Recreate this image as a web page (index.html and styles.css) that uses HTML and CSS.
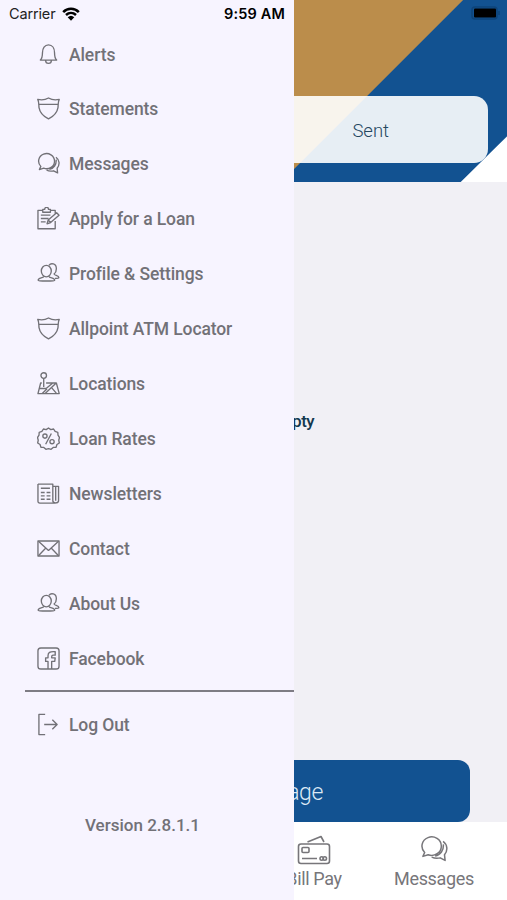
FILE: index.html
```
<!DOCTYPE html>
<html lang="en">
<head>
    <meta charset="UTF-8">
    <meta name="viewport" content="width=device-width, initial-scale=1.0">
    <title>Messages</title>
    <link rel="stylesheet" href="styles.css">
</head>
<body>
    <svg class="sprite">
        <symbol id="bell" viewBox="0 0 24 24">
            <path d="M3.500 17.800c1.800-1.500 2.200-3 2.200-7.500C5.700 5.500 8 2 12 2s6.300 3.500 6.300 8.300c0 4.500.4 6 2.200 7.500zM9 18.200a3 3 0 0 0 6 0"/>
        </symbol>
        <symbol id="shield" viewBox="0 0 24 24">
            <path d="M.8 2.500c4 .9 7.700.6 11.200-1.500 3.500 2.100 7.200 2.400 11.200 1.500-1.500 3-.9 5.500-1.300 8.500-.8 5-4.500 9-9.900 11.800C6.600 20 2.900 16 2.100 11c-.4-3 .2-5.500-1.300-8.500zM2.200 7.700h19.600"/>
        </symbol>
        <symbol id="chat" viewBox="0 0 24 24">
            <path d="M4 15A8.300 7.900 0 1 1 7 16.900L2.500 18.300zM19.800 5.500c3.700 2.700 4.300 7.700 1.200 11.500l.5 4.800-4.200-2.200c-2.500.6-5 .4-7.300-.6M20 8c.5 5-2.500 9.300-7 10"/>
        </symbol>
        <symbol id="apply" viewBox="0 0 24 24">
            <path d="M6 3.500H1v19.200h18v-8M14 3.500h5v3.200M6 5.500v-3h2c0-3 4-3 4 0h2v3zM4 8.500h10M4 12h8M4 15.500h5M10.500 17.500l1.200-4L20.500 6l2.500 2.600-8.800 7.600zM11.700 13.500l2.500 2.700"/>
        </symbol>
        <symbol id="people" viewBox="0 0 24 24">
            <ellipse cx="9.700" cy="9.500" rx="5.200" ry="6"/>
            <path d="M7 14.800c0 2.500-5.800 1.200-5.800 4.200 0 1.200 17.300 1.200 17.300 0 0-3-6-1.700-6-4.200M12.500 3.500c2-2.800 7.700-2.300 7.700 3.500 0 2.500-1 4.500-2.400 5.500.2 1.800 5 1.300 5 3.700 0 .6-1.500.9-4 .9"/>
        </symbol>
        <symbol id="map" viewBox="0 0 24 24">
            <circle cx="7" cy="3.700" r="2.900"/>
            <path d="M7 6.600v9M5 11.500H3.800L1 22.500h22.200l-3-11H9.500M2.500 17l7 .2 7-5.700M8.500 22.500L19.500 12M5.500 22.500l5-5M15 16l5.500 6.500"/>
        </symbol>
        <symbol id="rate" viewBox="0 0 24 24">
            <path d="M12 1l2.400 1.700 2.900-.6 1.600 2.500 2.800.9.200 3L23.500 11l-.8 2.800.6 2.900-2.500 1.600-.9 2.800-3 .2-2.200 2L12 22.500l-2.700.8-2.200-2-3-.2-.9-2.800-2.500-1.600.6-2.900L.5 11l1.600-2.500.2-3 2.800-.9 1.600-2.500 2.900.6z"/>
            <circle cx="8.300" cy="9.500" r="2.200"/><circle cx="15.700" cy="15.300" r="2.200"/>
            <path d="M15 6.800L9 18"/>
        </symbol>
        <symbol id="news" viewBox="0 0 24 24">
            <path d="M1 2.200h15.500v17.300c0 3 6 3 6 0V4.500h-3v15M19.500 22H3c-1.300 0-2-.7-2-2V2.200M16.500 4.500h3"/>
            <path class="bold" d="M4 6.500h9.500M4 11h4M4 14.500h4M4 18h4M10 11h4M10 14.500h4M10 18h4"/>
        </symbol>
        <symbol id="mail" viewBox="0 0 24 24">
            <path class="bold" d="M1 4.200h22v15.600H1z"/>
            <path d="M1.500 4.500L12 14 22.500 4.500M1.500 19.500l7.700-8M22.500 19.500l-7.700-8"/>
        </symbol>
        <symbol id="facebook" viewBox="0 0 24 24">
            <rect x="1" y="1" width="22" height="22" rx="3"/>
            <path d="M11.500 23v-8H9v-3.700h2.500V9c0-3 1.700-4.500 7.500-4v3.500h-2c-1.300 0-1.700.5-1.700 2.800H19l-.5 3.700h-3.200v8"/>
        </symbol>
        <symbol id="logout" viewBox="0 0 24 24">
            <path d="M8.500 1.500H2v21h6.500M7.500 12H21M16 7l5 5-5 5"/>
        </symbol>
        <symbol id="cards" viewBox="0 0 34 30">
            <rect x="1.500" y="9" width="31" height="19.500" rx="2.500"/>
            <rect x="5" y="12.500" width="7" height="5" rx="1"/>
            <path d="M10.500 7L24 1.500l3 5.500M5 23.500h15"/>
            <circle cx="24.700" cy="23.500" r="1.700"/><circle cx="27.800" cy="23.500" r="1.700"/>
        </symbol>
    </svg>

    <div class="screen">
        <header class="banner">
            <div class="tabs">
                <span class="tab">Inbox</span>
                <span class="tab">Sent</span>
            </div>
        </header>
        <main class="content">
            <p class="empty">Mailbox is empty</p>
            <button class="new-message">New Message</button>
        </main>
        <nav class="bottom-nav">
            <a class="nav-item"><svg class="nav-icon"><use href="#cards"/></svg>Bill Pay</a>
            <a class="nav-item"><svg class="nav-icon chat"><use href="#chat"/></svg>Messages</a>
        </nav>

        <svg class="battery" viewBox="0 0 30 14">
            <rect class="case" x="1" y="1" width="25" height="12" rx="3"/>
            <rect x="3" y="2.500" width="22" height="9" rx="1"/>
            <path class="case" d="M28 5v4"/>
        </svg>

        <aside class="drawer">
            <div class="status-bar">
                <span>Carrier</span>
                <svg class="wifi" viewBox="0 0 18 14">
                    <path d="M1.200 5.200C5.500.7 12.500.7 16.800 5.200M4 8c3-2.800 7-2.800 10 0"/>
                    <path class="dot" d="M5.700 10.200a4.800 4.800 0 0 1 6.600 0L9 13.700z"/>
                </svg>
                <span class="time">9:59 AM</span>
            </div>
            <ul class="menu">
                <li><svg class="icon"><use href="#bell"/></svg>Alerts</li>
                <li><svg class="icon"><use href="#shield"/></svg>Statements</li>
                <li><svg class="icon"><use href="#chat"/></svg>Messages</li>
                <li><svg class="icon"><use href="#apply"/></svg>Apply for a Loan</li>
                <li><svg class="icon"><use href="#people"/></svg>Profile &amp; Settings</li>
                <li><svg class="icon"><use href="#shield"/></svg>Allpoint ATM Locator</li>
                <li><svg class="icon"><use href="#map"/></svg>Locations</li>
                <li><svg class="icon"><use href="#rate"/></svg>Loan Rates</li>
                <li><svg class="icon"><use href="#news"/></svg>Newsletters</li>
                <li><svg class="icon"><use href="#mail"/></svg>Contact</li>
                <li><svg class="icon"><use href="#people"/></svg>About Us</li>
                <li><svg class="icon"><use href="#facebook"/></svg>Facebook</li>
            </ul>
            <div class="logout"><svg class="icon"><use href="#logout"/></svg>Log Out</div>
            <p class="version">Version 2.8.1.1</p>
        </aside>
    </div>
</body>
</html>
```
FILE: styles.css
```
body {
    margin: 0;
    font-family: Roboto, sans-serif;
    color: #727177;
}
svg {
    fill: none;
    stroke: currentColor;
    stroke-linejoin: round;
}
.sprite {
    display: none;
}
.screen {
    position: relative;
    width: 507px;
    height: 900px;
    display: flex;
    flex-direction: column;
    overflow: hidden;
    background: #f1f0f5;
}

/* page behind the drawer */
.banner {
    box-sizing: border-box;
    height: 182px;
    padding: 96px 19px 0;
    background: linear-gradient(315.500deg, #fff 32px, transparent 33px), linear-gradient(135deg, #bb8d4b 327px, #125291 328px);
}
.tabs {
    display: flex;
    height: 67px;
    border-radius: 14px;
    background: rgba(255, 255, 255, 0.9);
}
.tab {
    flex: 1;
    text-align: center;
    line-height: 70px;
    font-size: 18.5px;
    font-weight: 300;
    color: #24475f;
}
.content {
    flex: 1;
    display: flex;
    flex-direction: column;
    justify-content: space-between;
    padding: 228px 37px 0;
}
.empty {
    margin: 0;
    text-align: center;
    font-size: 17px;
    line-height: 22px;
    font-weight: 500;
    letter-spacing: -0.5px;
    color: #12384f;
}
.new-message {
    height: 62px;
    padding: 3px 0 0;
    border: 0;
    border-radius: 12px;
    background: #125291;
    color: #dce9f5;
    font-family: inherit;
    font-size: 23px;
    font-weight: 300;
    letter-spacing: -0.4px;
}
.bottom-nav {
    box-sizing: border-box;
    height: 78px;
    padding: 13px 13px 0;
    display: flex;
    justify-content: flex-end;
    background: #fff;
}
.nav-item {
    width: 120px;
    display: flex;
    flex-direction: column;
    align-items: center;
    gap: 1px;
    font-size: 18px;
    line-height: 26px;
    letter-spacing: -0.35px;
    color: #77767a;
}
.nav-icon {
    width: 34px;
    height: 30px;
    stroke-width: 1.6;
}
.nav-icon.chat {
    height: 28px;
    margin-bottom: 2px;
    stroke-width: 1.3;
}
.battery {
    position: absolute;
    top: 6px;
    right: 6px;
    width: 30px;
    height: 14px;
    fill: #000;
    stroke: none;
}
.battery .case {
    fill: none;
    stroke: #0e4479;
    stroke-width: 1.5;
}

/* side menu */
.drawer {
    position: absolute;
    top: 0;
    left: 0;
    width: 294px;
    height: 900px;
    background: #f7f4ff;
}
.status-bar {
    display: flex;
    align-items: center;
    height: 27px;
    padding: 0 9px;
    font-family: Inter, sans-serif;
    font-size: 14.5px;
    color: #222;
}
.status-bar span:first-child {
    letter-spacing: -0.15px;
}
.wifi {
    width: 18px;
    height: 14px;
    margin-left: 7px;
    color: #000;
    stroke-width: 2.5;
}
.wifi .dot {
    fill: #000;
    stroke: none;
}
.time {
    margin-left: auto;
    font-weight: 600;
    letter-spacing: 0.15px;
    color: #000;
}
.menu {
    list-style: none;
    margin: 0 0 0 25px;
    padding: 1px 0 4px 12px;
    border-bottom: 2px solid #7e7c84;
}
.menu li, .logout {
    display: flex;
    align-items: center;
    gap: 9px;
    height: 55px;
    font-size: 17.5px;
    font-weight: 500;
    letter-spacing: -0.1px;
}
.menu li:first-child {
    height: 53px;
}
.icon {
    width: 23px;
    height: 23px;
    stroke-width: 1.4;
}
.icon .bold {
    stroke-width: 1.8;
}
.logout {
    margin: 5px 0 0 37px;
}
.version {
    margin: 62px 0 0 85px;
    font-size: 17px;
    line-height: 22px;
    font-weight: 500;
}
```
